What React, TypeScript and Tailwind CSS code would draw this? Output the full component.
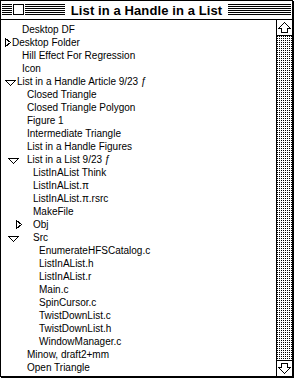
import React from 'react';

type Row = {
    text: string;
    tri?: 'right' | 'down';
    triCls?: string;
    textCls: string;
};

const rows: Row[] = [
    { text: "Desktop DF", textCls: "ml-[21px]" },
    { text: "Desktop Folder", tri: 'right', triCls: "ml-[4px]", textCls: "ml-[1px]" },
    { text: "Hill Effect For Regression", textCls: "ml-[21px]" },
    { text: "Icon", textCls: "ml-[21px]" },
    { text: "List in a Handle Article 9/23 ƒ", tri: 'down', triCls: "ml-[4px]", textCls: "ml-[1px]" },
    { text: "Closed Triangle", textCls: "ml-[26px]" },
    { text: "Closed Triangle Polygon", textCls: "ml-[26px]" },
    { text: "Figure 1", textCls: "ml-[26px]" },
    { text: "Intermediate Triangle", textCls: "ml-[26px]" },
    { text: "List in a Handle Figures", textCls: "ml-[26px]" },
    { text: "List in a List 9/23 ƒ", tri: 'down', triCls: "ml-[7px]", textCls: "ml-[8px]" },
    { text: "ListInAList Think", textCls: "ml-[32px]" },
    { text: "ListInAList.π", textCls: "ml-[32px]" },
    { text: "ListInAList.π.rsrc", textCls: "ml-[32px]" },
    { text: "MakeFile", textCls: "ml-[32px]" },
    { text: "Obj", tri: 'right', triCls: "ml-[15px]", textCls: "ml-[11px]" },
    { text: "Src", tri: 'down', triCls: "ml-[7px]", textCls: "ml-[14px]" },
    { text: "EnumerateHFSCatalog.c", textCls: "ml-[38px]" },
    { text: "ListInAList.h", textCls: "ml-[38px]" },
    { text: "ListInAList.r", textCls: "ml-[38px]" },
    { text: "Main.c", textCls: "ml-[38px]" },
    { text: "SpinCursor.c", textCls: "ml-[38px]" },
    { text: "TwistDownList.c", textCls: "ml-[38px]" },
    { text: "TwistDownList.h", textCls: "ml-[38px]" },
    { text: "WindowManager.c", textCls: "ml-[38px]" },
    { text: "Minow, draft2+mm", textCls: "ml-[26px]" },
    { text: "Open Triangle", textCls: "ml-[26px]" },
];

const Triangle = ({ dir, className }: { dir: 'right' | 'down'; className?: string }) =>
    dir === 'right' ? (
        <svg width="6" height="9" viewBox="0 0 6 9" className={`shrink-0 mt-[2px] ${className ?? ''}`} shapeRendering="crispEdges">
            <polygon points="0.5,0.5 5.5,4.5 0.5,8.5" fill="#fff" stroke="#000" strokeWidth="1" />
        </svg>
    ) : (
        <svg width="11" height="6" viewBox="0 0 11 6" className={`shrink-0 mt-[5px] ${className ?? ''}`} shapeRendering="crispEdges">
            <polygon points="0.5,0.5 10.5,0.5 5.5,5.5" fill="#fff" stroke="#000" strokeWidth="1" />
        </svg>
    );

const Arrow = ({ down }: { down?: boolean }) => (
    <svg width="15" height="15" viewBox="0 0 15 15" className={down ? 'rotate-180' : ''} shapeRendering="crispEdges">
        <polygon
            points="7.5,2.5 13.5,8.5 10.5,8.5 10.5,12.5 4.5,12.5 4.5,8.5 1.5,8.5"
            fill="#fff"
            stroke="#000"
            strokeWidth="1"
        />
    </svg>
);

// title bar rules: six 1px lines, 1px apart
const Stripes = ({ className }: { className?: string }) => (
    <svg className={`block h-[11px] ${className ?? ''}`} height="11" preserveAspectRatio="none" shapeRendering="crispEdges">
        {[0, 2, 4, 6, 8, 10].map((y) => (
            <rect key={y} x="0" y={y} width="100%" height="1" fill="#000" />
        ))}
    </svg>
);

export default function App() {
    return (
        <div className="w-[297px] h-[380px] bg-white font-['Liberation_Sans',Arial,sans-serif] text-black">
            <div className="w-[293px] h-[377px] border border-black shadow-[1px_1px_0_#000] flex flex-col bg-white overflow-hidden">
                {/* Title bar */}
                <div className="h-[19px] shrink-0 border-b border-black pt-[3px] px-[1px]">
                    <div className="h-[11px] grid grid-cols-[1fr_auto_1fr]">
                        <div className="flex items-stretch min-w-0">
                            <Stripes className="w-[10px] shrink-0" />
                            <div className="px-[1px] shrink-0">
                                <div className="w-[11px] h-[11px] border border-black" />
                            </div>
                            <Stripes className="flex-1 min-w-0" />
                        </div>
                        <div className="px-[6px] flex items-center">
                            <span className="text-[13px] leading-none font-bold tracking-[0.1px] whitespace-nowrap">
                                List in a Handle in a List
                            </span>
                        </div>
                        <Stripes className="w-full min-w-0" />
                    </div>
                </div>

                {/* Body */}
                <div className="flex flex-1 -mt-[1px]">
                    <div className="flex-1 pt-[4px] text-[10px]">
                        {rows.map((row, i) => (
                            <div key={i} className="h-[13px] flex items-start">
                                {row.tri && <Triangle dir={row.tri} className={row.triCls} />}
                                <span className={`leading-[13px] whitespace-nowrap ${row.textCls}`}>{row.text}</span>
                            </div>
                        ))}
                    </div>

                    {/* Scroll bar */}
                    <div className="w-[16px] shrink-0 border-l border-t border-black flex flex-col">
                        <div className="h-[16px] border-b border-black flex items-center justify-center bg-white">
                            <Arrow />
                        </div>
                        <div className="flex-1 bg-[linear-gradient(to_right,transparent_1px,#fff_1px),linear-gradient(to_bottom,#000_1px,#fff_1px)] bg-[length:2px_2px]" />
                        <div className="h-[16px] border-t border-black flex items-center justify-center bg-white">
                            <Arrow down />
                        </div>
                    </div>
                </div>
            </div>
        </div>
    );
}
